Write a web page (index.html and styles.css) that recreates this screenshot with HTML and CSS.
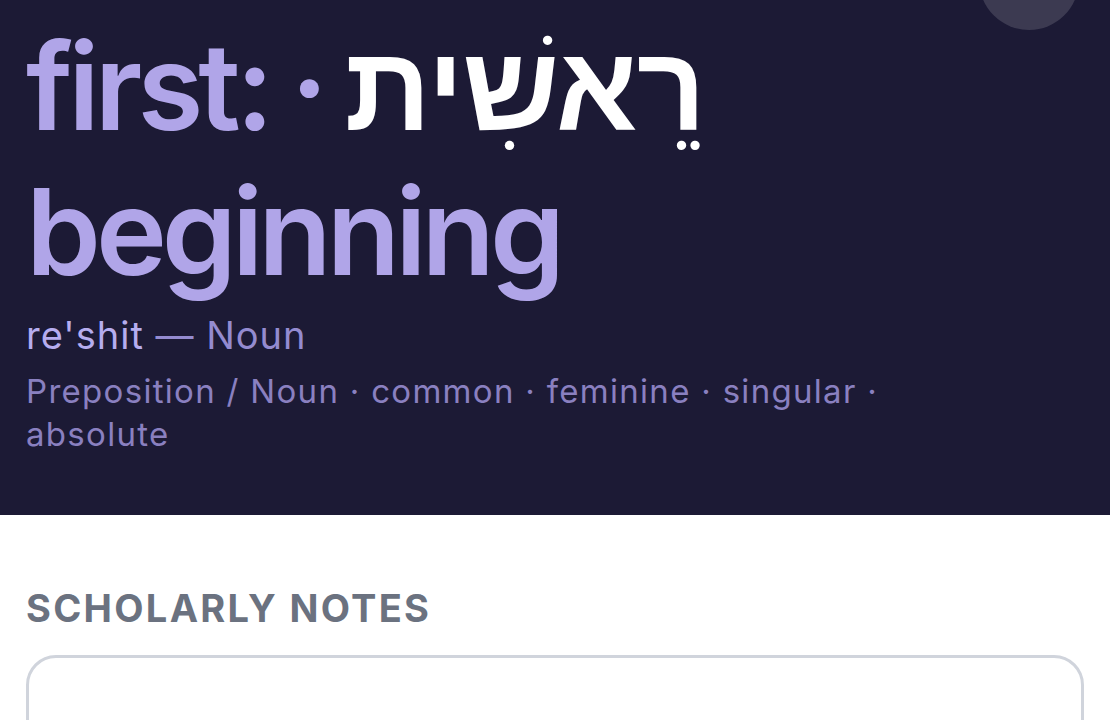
FILE: index.html
```html
<!DOCTYPE html>
<html lang="en">
<head>
<meta charset="utf-8">
<link rel="stylesheet" href="styles.css">
</head>
<body>
<header class="hero">
  <div class="orb"></div>
  <h1 class="title"><span class="gloss">first: · </span><span class="heb" lang="he" dir="rtl">רֵאשִׁית</span><br><span class="gloss">beginning</span></h1>
  <p class="translit"><span class="tr">re'shit</span> <span class="pos">— Noun</span></p>
  <p class="morph">Preposition / Noun · common · feminine · singular · absolute</p>
</header>
<main class="content">
  <h2 class="section-label">SCHOLARLY NOTES</h2>
  <div class="card"></div>
</main>
</body>
</html>
```
FILE: styles.css
```css
html, body {
  margin: 0;
  padding: 0;
  background: #ffffff;
  font-family: Inter, "Liberation Sans", sans-serif;
  overflow: hidden;
}
.hero {
  position: relative;
  background: #1c1a35;
  padding: 15px 26px 0;
  height: 500px;
  box-sizing: content-box;
}
.orb {
  position: absolute;
  left: 979px;
  top: -70px;
  width: 100px;
  height: 100px;
  border-radius: 50%;
  background: rgba(255, 255, 255, 0.14);
}
.title {
  margin: 0;
  font-size: 120px;
  line-height: 144px;
  font-weight: 600;
  letter-spacing: -5px;
  word-spacing: -4px;
  color: #b0a5e8;
}
.heb {
  font-family: "Liberation Sans", "DejaVu Sans", sans-serif;
  color: #ffffff;
  font-weight: 700;
  letter-spacing: -1px;
  word-spacing: 0;
}
.translit {
  margin: 5px 0 0;
  font-size: 38px;
  line-height: 52px;
  letter-spacing: 1px;
}
.tr { color: #b6adef; }
.pos { color: #948bd0; }
.morph {
  margin: 9px 0 0;
  font-size: 33px;
  line-height: 43px;
  letter-spacing: 1.3px;
  color: #8a80c0;
  max-width: 900px;
}
.content {
  padding: 70px 26px 0;
}
.section-label {
  margin: 0;
  font-size: 38px;
  line-height: 46px;
  font-weight: 700;
  letter-spacing: 2.3px;
  color: #6b7280;
}
.card {
  margin-top: 24px;
  height: 200px;
  border: 3px solid #d0d4dc;
  border-radius: 30px;
}
```
